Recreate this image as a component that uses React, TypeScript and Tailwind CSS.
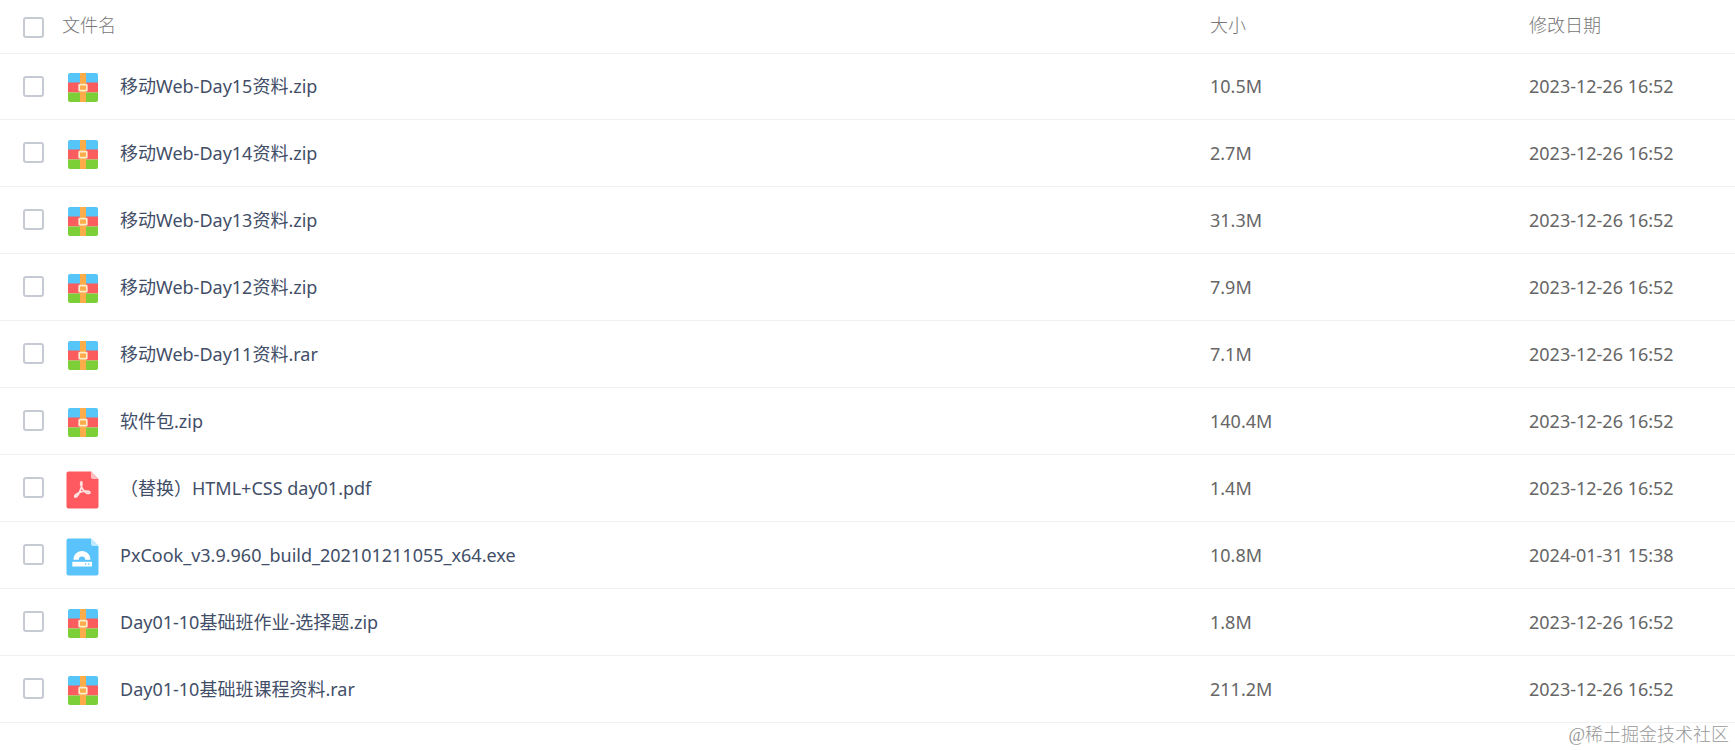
type FileKind = "archive" | "pdf" | "exe";

interface FileItem {
  name: string;
  size: string;
  date: string;
  kind: FileKind;
}

const files: FileItem[] = [
  { name: "移动Web-Day15资料.zip", size: "10.5M", date: "2023-12-26 16:52", kind: "archive" },
  { name: "移动Web-Day14资料.zip", size: "2.7M", date: "2023-12-26 16:52", kind: "archive" },
  { name: "移动Web-Day13资料.zip", size: "31.3M", date: "2023-12-26 16:52", kind: "archive" },
  { name: "移动Web-Day12资料.zip", size: "7.9M", date: "2023-12-26 16:52", kind: "archive" },
  { name: "移动Web-Day11资料.rar", size: "7.1M", date: "2023-12-26 16:52", kind: "archive" },
  { name: "软件包.zip", size: "140.4M", date: "2023-12-26 16:52", kind: "archive" },
  { name: "（替换）HTML+CSS day01.pdf", size: "1.4M", date: "2023-12-26 16:52", kind: "pdf" },
  { name: "PxCook_v3.9.960_build_202101211055_x64.exe", size: "10.8M", date: "2024-01-31 15:38", kind: "exe" },
  { name: "Day01-10基础班作业-选择题.zip", size: "1.8M", date: "2023-12-26 16:52", kind: "archive" },
  { name: "Day01-10基础班课程资料.rar", size: "211.2M", date: "2023-12-26 16:52", kind: "archive" },
];

function ArchiveIcon() {
  return (
    <svg className="h-11 w-10 shrink-0" viewBox="0 0 40 44" aria-hidden="true">
      <path d="M8 9h26a2 2 0 0 1 2 2v8H6v-8a2 2 0 0 1 2-2z" fill="#56c5f8" />
      <path d="M6 18.5h30v10H6z" fill="#fb5d5f" />
      <path d="M6 28.5h30V36a2 2 0 0 1-2 2H8a2 2 0 0 1-2-2z" fill="#7dcf38" />
      <path d="M18 9h6v29h-6z" fill="#fcac48" />
      <rect x="17.200" y="20.700" width="7.600" height="6" rx="0.5" fill="#fcac48" stroke="#ffeccb" strokeWidth="1.700" />
    </svg>
  );
}

function PdfIcon() {
  return (
    <svg className="h-11 w-10 shrink-0" viewBox="0 0 40 44" aria-hidden="true">
      <path d="M6.5 5.5H29l7.5 7.5v27.5a2 2 0 0 1-2 2h-28a2 2 0 0 1-2-2v-33a2 2 0 0 1 2-2z" fill="#ff5a5f" />
      <path d="M29 5.5l7.5 7.5H31a2 2 0 0 1-2-2z" fill="#ffc0c2" />
      <path
        d="M19.3 15.8c-.8 0-.8 1.4-.3 3.4.8 3 3 6.3 5.6 7.7 1.7.8 3.4.5 3.4-.5s-2.200-1.500-5-1.200c-2.500.2-5 1-7 2-2.500 1.200-3.700 2.700-3.200 3.600.6 1 2.700-.6 4.200-3.500 1.300-2.600 2.600-6 2.900-8.700.1-1.700 0-2.800-.6-2.800z"
        fill="none"
        stroke="#ffe3e3"
        strokeWidth="1.7"
        strokeLinecap="round"
        strokeLinejoin="round"
      />
    </svg>
  );
}

function ExeIcon() {
  return (
    <svg className="h-11 w-10 shrink-0" viewBox="0 0 40 44" aria-hidden="true">
      <path d="M6.5 5.5H29l7.5 7.5v27.5a2 2 0 0 1-2 2h-28a2 2 0 0 1-2-2v-33a2 2 0 0 1 2-2z" fill="#5ac3fb" />
      <path d="M29 5.5l7.5 7.5H31a2 2 0 0 1-2-2z" fill="#c1e9ff" />
      <path d="M11.5 26.800c0-5.300 3.700-8.800 8.500-8.800s8.500 3.500 8.500 8.800h-5.300a3.200 3.200 0 0 0-6.400 0z" fill="#fff" />
      <path d="M10.300 28.800h19.700v4.700H10.300z" fill="#fff" />
      <path d="M23 30.500h1.300v1.300H23zM26 30.500h1.300v1.300H26z" fill="#5ac3fb" />
    </svg>
  );
}

function FileIcon({ kind }: { kind: FileKind }) {
  if (kind === "pdf") return <PdfIcon />;
  if (kind === "exe") return <ExeIcon />;
  return <ArchiveIcon />;
}

function Checkbox({ id, label }: { id: string; label?: string }) {
  return (
    <input
      id={id}
      type="checkbox"
      aria-label={label}
      className="block size-[21px] appearance-none rounded-[3px] border-2 border-[#c6cad3] bg-white checked:bg-[#06a7ff]"
    />
  );
}

export default function App() {
  return (
    <main className="bg-white font-['Noto_Sans','Noto_Sans_CJK_SC',sans-serif] text-lg leading-6">
      <table className="w-full table-fixed border-collapse text-left">
        <colgroup>
          <col className="w-[62px]" />
          <col />
          <col className="w-[319px]" />
          <col className="w-[206px]" />
        </colgroup>
        <thead>
          <tr className="h-[53px] border-b border-[#f1f2f4] text-[#777]">
            <th className="pt-0.5 pl-[23px]">
              <Checkbox id="select-all" label="全选" />
            </th>
            <th className="pb-0.5 font-light">文件名</th>
            <th className="pb-0.5 font-light">大小</th>
            <th className="pb-0.5 font-light">修改日期</th>
          </tr>
        </thead>
        <tbody>
          {files.map((file, index) => (
            <tr key={file.name} className="h-[67px] border-b border-[#f1f2f4] text-[#666] first:h-[66px]">
              <td className="pl-[23px]">
                <Checkbox id={`file-${index}`} />
              </td>
              <td>
                <label htmlFor={`file-${index}`} className="flex items-center gap-[18px] text-[#424e67]">
                  <FileIcon kind={file.kind} />
                  {file.name}
                </label>
              </td>
              <td>{file.size}</td>
              <td>{file.date}</td>
            </tr>
          ))}
        </tbody>
      </table>
      <p className="pr-1.5 text-right font-['Liberation_Serif','Noto_Sans_CJK_SC',serif] font-light leading-6 text-[#999]">
        @稀土掘金技术社区
      </p>
    </main>
  );
}
